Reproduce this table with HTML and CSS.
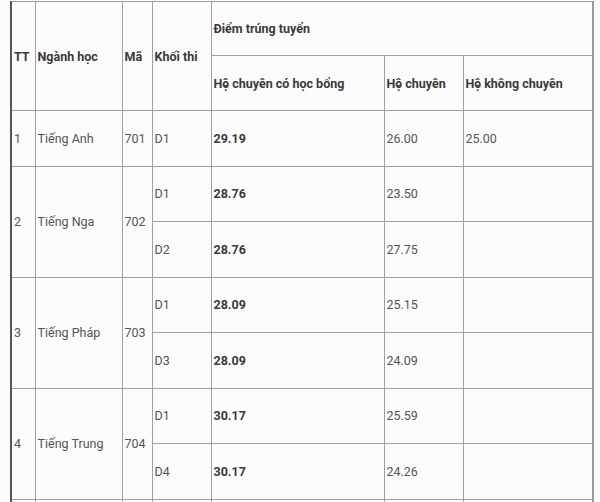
FILE: index.html
```html
<!DOCTYPE html>
<html lang="vi">
<head>
<meta charset="utf-8">
<link rel="stylesheet" href="styles.css">
</head>
<body>
<table class="scores">
  <colgroup>
    <col class="c-tt"><col class="c-name"><col class="c-code"><col class="c-block"><col class="c-hb"><col class="c-hc"><col class="c-hk">
  </colgroup>
  <thead>
    <tr class="h1">
      <th rowspan="2">TT</th>
      <th rowspan="2">Ngành học</th>
      <th rowspan="2">Mã</th>
      <th rowspan="2">Khối thi</th>
      <th colspan="3">Điểm trúng tuyển</th>
    </tr>
    <tr class="h2">
      <th>Hệ chuyên có học bổng</th>
      <th>Hệ chuyên</th>
      <th>Hệ không chuyên</th>
    </tr>
  </thead>
  <tbody>
    <tr>
      <td>1</td><td>Tiếng Anh</td><td>701</td><td>D1</td><td class="b">29.19</td><td>26.00</td><td>25.00</td>
    </tr>
    <tr>
      <td rowspan="2">2</td><td rowspan="2">Tiếng Nga</td><td rowspan="2">702</td><td>D1</td><td class="b">28.76</td><td>23.50</td><td></td>
    </tr>
    <tr>
      <td>D2</td><td class="b">28.76</td><td>27.75</td><td></td>
    </tr>
    <tr>
      <td rowspan="2">3</td><td rowspan="2">Tiếng Pháp</td><td rowspan="2">703</td><td>D1</td><td class="b">28.09</td><td>25.15</td><td></td>
    </tr>
    <tr>
      <td>D3</td><td class="b">28.09</td><td>24.09</td><td></td>
    </tr>
    <tr>
      <td rowspan="2">4</td><td rowspan="2">Tiếng Trung</td><td rowspan="2">704</td><td>D1</td><td class="b">30.17</td><td>25.59</td><td></td>
    </tr>
    <tr>
      <td>D4</td><td class="b">30.17</td><td>24.26</td><td></td>
    </tr>
    <tr>
      <td></td><td></td><td></td><td></td><td></td><td></td><td></td>
    </tr>
  </tbody>
</table>
</body>
</html>
```
FILE: styles.css
```css
html, body {
  margin: 0;
  padding: 0;
  background: #fcfbfc;
}
body {
  padding: 1px 0 0 10px;
  font-family: Roboto, "Liberation Sans", sans-serif;
  font-size: 12.5px;
  color: #555;
  overflow: hidden;
  height: 502px;
}
.scores {
  border-collapse: collapse;
  table-layout: fixed;
  width: 582px;
  border-left: 2px solid #555;
  border-top: 1px solid #999;
  border-right: 2px solid #999;
}
.c-tt { width: 24px; }
.c-name { width: 87px; }
.c-code { width: 30px; }
.c-block { width: 59px; }
.c-hb { width: 173px; }
.c-hc { width: 79px; }
.c-hk { width: 130px; }
th, td {
  border: 1px solid #a0a0a0;
  padding: 0 2px;
  text-align: left;
  vertical-align: middle;
  box-sizing: border-box;
  overflow: hidden;
  white-space: nowrap;
}
th {
  font-weight: bold;
  color: #3a3a3a;
}
.h1 th { height: 54px; }
.h2 th { height: 55px; }
tbody td { height: 55.5px; }
td.b {
  font-weight: bold;
  color: #3a3a3a;
}
```
